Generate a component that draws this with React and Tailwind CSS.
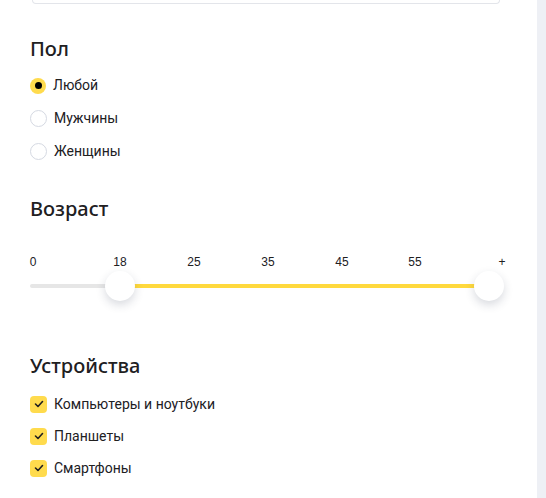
import React from 'react';

const font = { fontFamily: '"Noto Sans", "Open Sans", sans-serif' };
const body = { fontFamily: 'Roboto, "Noto Sans", sans-serif' };

const Radio = ({ checked, label }) => (
    <div className="flex items-center h-[33px]">
        {checked ? (
            <span className="w-[16px] h-[16px] rounded-full bg-[#ffdb4d] flex items-center justify-center">
                <span className="w-[7px] h-[7px] rounded-full bg-black" />
            </span>
        ) : (
            <span className="w-[17px] h-[17px] rounded-full border border-[#d5d9e2] bg-white" />
        )}
        <span className="ml-[7px] text-[14px] text-[#21201f]" style={body}>{label}</span>
    </div>
);

const Check = ({ label }) => (
    <div className="flex items-center h-[32px]">
        <span className="w-[17px] h-[17px] rounded-[4px] bg-[#ffdb4d] flex items-center justify-center">
            <svg width="10" height="8" viewBox="0 0 10 8" fill="none">
                <path d="M1.5 4l2.5 2.5 4.5-5" stroke="#21201f" strokeWidth="1.6" strokeLinecap="round" strokeLinejoin="round" />
            </svg>
        </span>
        <span className="ml-[7px] text-[14px] text-[#21201f]" style={body}>{label}</span>
    </div>
);

const ticks = [
    { v: '0', x: 33 },
    { v: '18', x: 120 },
    { v: '25', x: 194 },
    { v: '35', x: 268 },
    { v: '45', x: 342 },
    { v: '55', x: 415 },
    { v: '+', x: 502 },
];

export default function App() {
    return (
        <div className="flex w-[546px] h-[498px] overflow-hidden bg-white" style={font}>
            <div className="w-[537px] shrink-0 bg-white">
                {/* bottom of the field above */}
                <div className="ml-[32px] w-[468px] h-[4px] border border-t-0 border-[#e3e5ea] rounded-b-[12px]" />

                {/* Пол */}
                <div className="pl-[30px]">
                    <h2 className="mt-[31px] text-[20px] leading-[28px] font-medium text-[#21201f]">Пол</h2>
                    <div className="mt-[6px]">
                        <Radio checked label="Любой" />
                        <Radio label="Мужчины" />
                        <Radio label="Женщины" />
                    </div>

                    {/* Возраст */}
                    <h2 className="mt-[27px] text-[20px] leading-[28px] font-medium text-[#21201f]">Возраст</h2>
                </div>

                <div className="relative h-[80px] mt-[18px]">
                    {ticks.map((t) => (
                        <span
                            key={t.v}
                            className="absolute top-[13px] -translate-x-1/2 text-[12px] leading-[16px] text-[#21201f]"
                            style={{ left: t.x, fontFamily: '"Liberation Sans", Arial, sans-serif' }}
                        >
                            {t.v}
                        </span>
                    ))}
                    <div className="absolute left-[30px] top-[43px] w-[90px] h-[4px] rounded-full bg-[#e6e6e6]" />
                    <div className="absolute left-[120px] top-[43px] w-[369px] h-[4px] bg-[#ffd93d]" />
                    <div className="absolute left-[105px] top-[30px] w-[30px] h-[30px] rounded-full bg-white shadow-[0_4px_10px_rgba(40,50,80,0.18)]" />
                    <div className="absolute left-[474px] top-[30px] w-[30px] h-[30px] rounded-full bg-white shadow-[0_4px_10px_rgba(40,50,80,0.18)]" />
                </div>

                {/* Устройства */}
                <div className="pl-[30px]">
                    <h2 className="mt-[31px] text-[20px] leading-[28px] font-medium text-[#21201f]">Устройства</h2>
                    <div className="mt-[8px]">
                        <Check label="Компьютеры и ноутбуки" />
                        <Check label="Планшеты" />
                        <Check label="Смартфоны" />
                    </div>
                </div>
            </div>
            <div className="flex-1 bg-[#eef0f5]" />
        </div>
    );
}
